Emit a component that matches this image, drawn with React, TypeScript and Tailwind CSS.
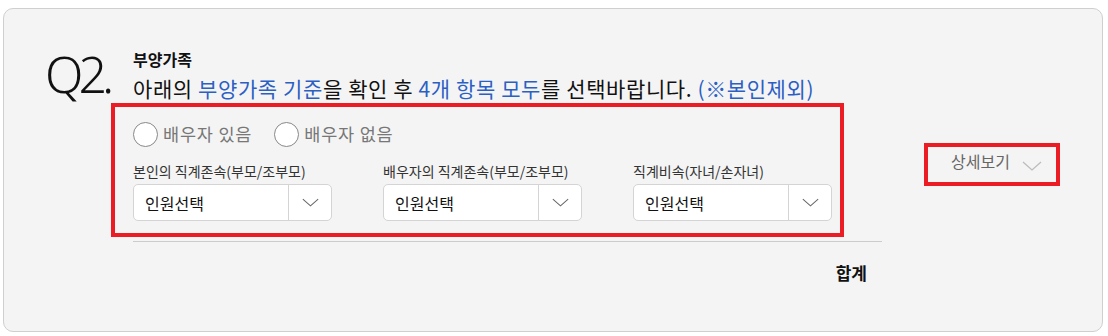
import React from "react";

const Chevron = ({ className }: { className?: string }) => (
  <svg className={className} viewBox="0 0 20 10" fill="none">
    <path d="M1 1 L10 9 L19 1" stroke="currentColor" strokeWidth="1.2" />
  </svg>
);

const SelectBox = ({ label }: { label: string }) => (
  <div className="flex flex-col w-[199px]">
    <div className="text-[14px] leading-[20px] text-[#333] mb-[3px] whitespace-nowrap">{label}</div>
    <div className="flex h-[37px] bg-white border border-[#d4d4d4] rounded-[5px]">
      <div className="flex-1 flex items-center pl-[11px] text-[16px] text-[#111]">인원선택</div>
      <div className="w-[43px] border-l border-[#d4d4d4] flex items-center justify-center text-[#666]">
        <Chevron className="w-[17px] h-[9px]" />
      </div>
    </div>
  </div>
);

const Radio = ({ label }: { label: string }) => (
  <div className="flex items-center gap-[5px]">
    <div className="w-[25px] h-[25px] rounded-full border-[1.5px] border-[#888] bg-white" />
    <span className="text-[17.5px] tracking-[0.8px] text-[#777]">{label}</span>
  </div>
);

export default function App() {
  return (
    <div
      className="w-[1108px] h-[336px] bg-white pt-[8px] pl-[3px]"
      style={{ fontFamily: '"Noto Sans CJK KR", "Noto Sans", sans-serif' }}
    >
      <div className="w-[1100px] h-[324px] border border-[#cfcfcf] rounded-[10px] bg-[#f4f4f4] flex pl-[41px]">
        <div className="w-[88px] pt-[35px]">
          <div
            className="text-[50px] leading-[60px] font-light text-[#111] tracking-[-5px]"
            style={{ fontFamily: '"Noto Sans", sans-serif' }}
          >
            Q2.
          </div>
        </div>
        <div className="w-[749px] pt-[39px] flex flex-col">
          <div className="text-[16px] leading-[22px] font-bold text-[#111]">부양가족</div>
          <div className="mt-[3px] text-[21px] leading-[30px] text-[#111] whitespace-nowrap tracking-[0.6px]">
            아래의 <span className="text-[#2c5fc4]">부양가족 기준</span>을 확인 후{" "}
            <span className="text-[#2c5fc4]">4개 항목 모두</span>를 선택바랍니다.{" "}
            <span className="text-[#2c5fc4]">(※본인제외)</span>
          </div>
          <div className="relative">
            <div className="flex gap-[22px] pt-[18px]">
              <Radio label="배우자 있음" />
              <Radio label="배우자 없음" />
            </div>
            <div className="flex gap-[51px] mt-[14px]">
              <SelectBox label="본인의 직계존속(부모/조부모)" />
              <SelectBox label="배우자의 직계존속(부모/조부모)" />
              <SelectBox label="직계비속(자녀/손자녀)" />
            </div>
            <div className="absolute left-[-22px] top-[0px] w-[733px] h-[134px] border-[4px] border-[#ec1c24] pointer-events-none" />
          </div>
          <div className="mt-[20px] border-t border-[#cccccc]" />
          <div className="flex justify-end pr-[15px] pt-[20px]">
            <span className="text-[17px] leading-[22px] font-bold text-[#111]">합계</span>
          </div>
        </div>
        <div className="relative ml-[69px] mt-[142px] h-[20px] flex items-center gap-[12px] self-start">
          <span className="text-[16px] text-[#666]">상세보기</span>
          <Chevron className="w-[20px] h-[10px] text-[#bbb] mt-[10px]" />
          <div className="absolute left-[-27px] top-[-8px] w-[136px] h-[43px] border-[4px] border-[#ec1c24]" />
        </div>
      </div>
    </div>
  );
}
